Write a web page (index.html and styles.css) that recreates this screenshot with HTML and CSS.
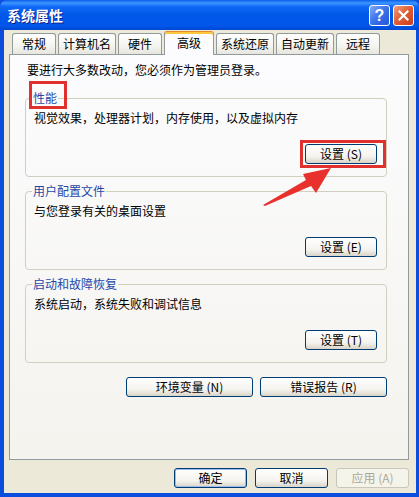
FILE: index.html
```html
<!DOCTYPE html>
<html lang="zh-CN">
<head>
  <meta charset="UTF-8">
  <title>系统属性</title>
  <link rel="stylesheet" href="styles.css">
</head>
<body>
  <div class="window">
    <div class="titlebar">
      <span class="title">系统属性</span>
      <div class="title-buttons">
        <span class="tbtn help">?</span>
        <span class="tbtn close">
          <svg width="11" height="11" viewBox="0 0 11 11"><path d="M1.5 1.5 L9.5 9.5 M9.5 1.5 L1.5 9.5" stroke="#fff" stroke-width="2.2" stroke-linecap="square"/></svg>
        </span>
      </div>
    </div>

    <div class="client">
      <div class="tabs">
        <div class="tab">常规</div>
        <div class="tab">计算机名</div>
        <div class="tab">硬件</div>
        <div class="tab active">高级</div>
        <div class="tab">系统还原</div>
        <div class="tab">自动更新</div>
        <div class="tab">远程</div>
      </div>

      <div class="panel">
        <p class="note">要进行大多数改动，您必须作为管理员登录。</p>

        <fieldset class="group">
          <legend>性能</legend>
          <p class="desc">视觉效果，处理器计划，内存使用，以及虚拟内存</p>
          <div class="actions"><button class="btn btn-small">设置 (S)</button></div>
        </fieldset>

        <fieldset class="group">
          <legend>用户配置文件</legend>
          <p class="desc">与您登录有关的桌面设置</p>
          <div class="actions"><button class="btn btn-small">设置 (E)</button></div>
        </fieldset>

        <fieldset class="group">
          <legend>启动和故障恢复</legend>
          <p class="desc">系统启动，系统失败和调试信息</p>
          <div class="actions"><button class="btn btn-small">设置 (T)</button></div>
        </fieldset>

        <div class="extra-buttons">
          <button class="btn btn-wide">环境变量 (N)</button>
          <button class="btn btn-wide">错误报告 (R)</button>
        </div>
      </div>

      <div class="dialog-buttons">
        <button class="btn btn-dialog default">确定</button>
        <button class="btn btn-dialog">取消</button>
        <button class="btn btn-dialog" disabled>应用 (A)</button>
      </div>
    </div>

    <!-- red annotations drawn over the dialog -->
    <div class="mark mark-label"></div>
    <div class="mark mark-button"></div>
    <svg class="arrow" width="419" height="497" viewBox="0 0 419 497">
      <polygon points="263,205 306,180 303,174 331,168 316,193 311,186 265,206" fill="#e8302c"/>
    </svg>
  </div>
</body>
</html>
```

FILE: styles.css
```css
body {
  margin: 0;
  font-family: "Noto Sans CJK SC", "Liberation Sans", sans-serif;
  font-size: 12px;
  color: #000;
  background: #0b4ddd;
}

.window {
  position: relative;
  width: 419px;
  height: 497px;
  display: flex;
  flex-direction: column;
  background: #0b4ddd;
  border-radius: 7px 7px 0 0;
  overflow: hidden;
}

.titlebar {
  height: 30px;
  flex: none;
  display: flex;
  align-items: center;
  justify-content: space-between;
  padding: 0 5px 0 7px;
  background: linear-gradient(#0a5fea 0%, #3d95ff 10%, #1068f5 22%, #0058e8 50%, #0056ea 85%, #0048d2 100%);
}

.title {
  color: #fff;
  font-size: 14px;
  font-weight: bold;
  text-shadow: 1px 1px #0a1f8c;
  margin-top: -1px;
}

.title-buttons {
  display: flex;
  gap: 3px;
  margin-top: 1px;
}

.tbtn {
  width: 21px;
  height: 21px;
  box-sizing: border-box;
  border: 1px solid #fff;
  border-radius: 3px;
  display: flex;
  align-items: center;
  justify-content: center;
}

.help {
  background: linear-gradient(135deg, #80aaf8, #3a70e8 50%, #2457d6);
  color: #fff;
  font-family: "Liberation Sans", sans-serif;
  font-weight: bold;
  font-size: 16px;
}

.close {
  background: linear-gradient(135deg, #f0a080, #e05a32 50%, #c8401c);
}

.client {
  flex: 1;
  margin: 0 3px 4px 4px;
  padding-top: 1px;
  background: #ece9d8;
}

.tabs {
  display: flex;
  align-items: flex-end;
  gap: 2px;
  height: 23px;
  padding-left: 8px;
  position: relative;
  z-index: 1;
}

.tab {
  box-sizing: border-box;
  height: 21px;
  min-width: 44px;
  padding: 0 4px;
  border: 1px solid #919b9c;
  border-bottom: none;
  border-radius: 3px 3px 0 0;
  background: linear-gradient(#ffffff, #f4f4f0 60%, #e6e5de);
  text-align: center;
  line-height: 20px;
}

.tab.active {
  height: 24px;
  min-width: 50px;
  margin-bottom: -1px;
  border-top-color: #e68b2c;
  box-shadow: inset 0 2px 0 #ffc73c;
  background: #fcfcfe;
  line-height: 22px;
}

.panel {
  box-sizing: border-box;
  width: 400px;
  height: 406px;
  margin-left: 5px;
  padding: 7px 0 0 15px;
  border: 1px solid #919b9c;
  background: linear-gradient(#fcfcfe, #f4f3ee);
}

.note {
  margin: 0 0 13px 2px;
  line-height: 16px;
}

.group {
  box-sizing: border-box;
  width: 362px;
  margin: 0 0 7px;
  padding: 5px 9px 12px 8px;
  border: 1px solid #d0d0bf;
  border-radius: 4px;
}

.group legend {
  color: #1f47a8;
  padding: 0 1px;
  margin-left: -2px;
  line-height: 14px;
}

.desc {
  margin: 0;
  line-height: 16px;
}

.actions {
  display: flex;
  justify-content: flex-end;
  margin-top: 18px;
}

.btn {
  box-sizing: border-box;
  height: 20px;
  padding: 0;
  border: 1px solid #003c74;
  border-radius: 3px;
  background: linear-gradient(#ffffff, #f4f3ee 65%, #d9d4c8);
  font-family: "Noto Sans CJK SC", "Liberation Sans", sans-serif;
  font-size: 12px;
  line-height: 18px;
  color: #000;
}

.btn-small {
  width: 72px;
}

.btn-wide {
  width: 127px;
}

.btn-dialog {
  width: 73px;
}

.btn.default {
  box-shadow: inset 0 0 0 1px #9cbcf0;
}

.btn:disabled {
  border-color: #c9c7ba;
  background: #f5f4ea;
  color: #aca899;
}

.extra-buttons {
  display: flex;
  justify-content: flex-end;
  gap: 7px;
  width: 362px;
  margin-top: 14px;
}

.dialog-buttons {
  display: flex;
  justify-content: flex-end;
  gap: 8px;
  width: 400px;
  margin: 8px 0 0 5px;
}

.mark {
  position: absolute;
  box-sizing: border-box;
  border: 3px solid #e0312f;
}

.mark-label {
  left: 29px;
  top: 81px;
  width: 38px;
  height: 28px;
}

.mark-button {
  left: 300px;
  top: 140px;
  width: 86px;
  height: 28px;
}

.arrow {
  position: absolute;
  left: 0;
  top: 0;
  pointer-events: none;
}
```
